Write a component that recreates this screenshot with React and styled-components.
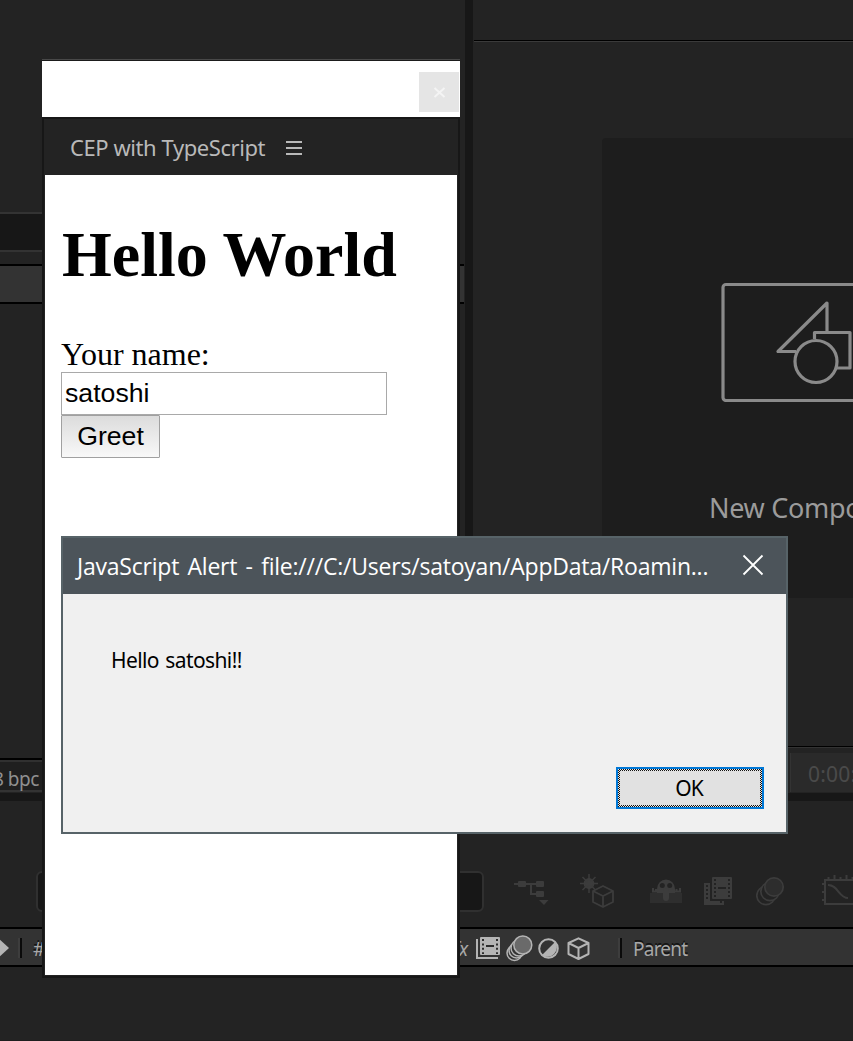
import React from "react";
import styled, { createGlobalStyle } from "styled-components";

const ui = '"Noto Sans", "Open Sans", sans-serif';

const GlobalStyle = createGlobalStyle`
  * { box-sizing: border-box; }
  html, body { margin: 0; padding: 0; background: #232323; overflow: hidden; }
`;

const Desktop = styled.div`
  position: relative;
  width: 853px;
  height: 1041px;
  overflow: hidden;
  display: flex;
  flex-direction: column;
  background: #232323;
  font-family: ${ui};
`;

const UpperRow = styled.div`
  display: flex;
  height: 793px;
`;

const Gutter = styled.div`
  flex: none;
  background: #171717;
  width: ${(p) => (p.$vertical ? "8px" : "100%")};
  height: ${(p) => (p.$vertical ? "auto" : "8px")};
`;

const ProjectPanel = styled.section`
  width: 465px;
  display: flex;
  flex-direction: column;
  padding-top: 212px;
`;

const ProjectSearch = styled.div`
  height: 40px;
  margin-right: 20px;
  background: #171717;
  border-top: 2px solid #333;
  border-bottom: 2px solid #333;
`;

const ProjectColumns = styled.div`
  height: 40px;
  margin: 12px 1px 0 0;
  background: #333;
  border-top: 2px solid #000;
  border-bottom: 2px solid #000;
`;

const ProjectFooter = styled.div`
  height: 34px;
  margin: auto 20px 1px 0;
  border-top: 2px solid #000;
  border-bottom: 2px solid #333;
  box-shadow: inset 0 2px #303030;
  background: #1f1f1f;
  display: flex;
  align-items: center;
  padding-top: 7px;
`;

const BitDepth = styled.span`
  margin-left: -7px;
  font-size: 19px;
  line-height: 26px;
  letter-spacing: -0.5px;
  white-space: nowrap;
  color: #909090;
`;

const CompPanel = styled.section`
  flex: 1;
  min-width: 0;
  overflow: hidden;
  display: flex;
  flex-direction: column;
`;

const CompTabs = styled.div`
  height: 42px;
  margin-left: 1px;
  border-bottom: 1px solid #3a3a3a;
  box-shadow: inset 0 -1px #000;
`;

const Viewer = styled.div`
  height: 704px;
  padding: 96px 0 0 129px;
`;

const NewCompCard = styled.div`
  width: 380px;
  height: 460px;
  padding: 143px 0 0 107px;
  border-radius: 4px;
  background: #1d1d1d;
  svg { display: block; margin-left: 11px; }
`;

const NewCompLabel = styled.div`
  margin-top: 88px;
  font-size: 27px;
  line-height: 36px;
  letter-spacing: -0.3px;
  white-space: nowrap;
  color: #9b9b9b;
`;

const ViewerFooter = styled.div`
  height: 47px;
  padding: 6px 0 1px 317px;
  border-top: 1px solid #000;
  box-shadow: inset 0 1px #333;
  background: #232323;
`;

const TimeField = styled.div`
  height: 39px;
  padding-left: 17px;
  border-left: 1px solid #333;
  background: #2a2a2a;
  font-size: 21px;
  line-height: 43px;
  letter-spacing: 0.2px;
  white-space: nowrap;
  color: #4a4a4a;
`;

const Timeline = styled.section`
  flex: 1;
  display: flex;
  flex-direction: column;
  overflow: hidden;
  border-bottom: 1px solid #1e1e1e;
`;

const TimelineTools = styled.div`
  display: flex;
  align-items: flex-start;
  height: 126px;
  padding: 70px 0 0 36px;
  svg { flex: none; }
`;

const SearchField = styled.div`
  width: 448px;
  height: 41px;
  flex: none;
  border: 2px solid #303030;
  border-radius: 6px;
  background: #171717;
  margin-right: 30px;
`;

const Slot = styled.span`
  display: block;
  flex: none;
  width: ${(p) => p.$w}px;
  height: 40px;
  svg { display: block; }
`;

const TimelineColumns = styled.div`
  display: flex;
  align-items: center;
  height: 40px;
  padding-top: 2px;
  border-top: 2px solid #000;
  border-bottom: 2px solid #000;
  background: #333;
  svg { flex: none; display: block; }
`;

const Divider = styled.i`
  flex: none;
  width: 4px;
  height: 20px;
  border-left: 2px solid #3d3d3d;
  border-right: 2px solid #0a0a0a;
`;

const HeaderText = styled.span`
  flex: none;
  width: ${(p) => p.$w}px;
  margin-left: ${(p) => p.$gap}px;
  padding-top: 2px;
  font-size: 19px;
  line-height: 34px;
  letter-spacing: ${(p) => p.$track || 0}px;
  font-style: ${(p) => (p.$italic ? "italic" : "normal")};
  color: #a8a8a8;
  text-shadow: ${(p) => (p.$italic ? "none" : "0 -2px 0 #141414")};
  white-space: nowrap;
`;

const PanelWindow = styled.div`
  position: absolute;
  left: 42px;
  top: 59px;
  width: 418px;
  height: 919px;
  display: flex;
  flex-direction: column;
  border-top: 1px solid #484848;
  background: #171717;
`;

const WindowBar = styled.div`
  height: 57px;
  display: flex;
  justify-content: flex-end;
  padding: 11px 1px 0 0;
  border-top: 1px solid #1b1b1b;
  background: #fff;
`;

const WindowClose = styled.button`
  width: 40px;
  height: 40px;
  padding: 0;
  border: 0;
  background: #e5e5e5;
  svg { display: block; }
`;

const PanelFrame = styled.div`
  flex: 1;
  margin: 2px;
  display: flex;
  flex-direction: column;
  padding: 0 1px 1px;
  background: #232323;
`;

const PanelTab = styled.div`
  height: 56px;
  display: flex;
  align-items: center;
  gap: 20px;
  padding: 2px 0 0 25px;
  color: #b9b9b9;
  font-size: 22px;
  letter-spacing: -0.43px;
  white-space: nowrap;
`;

const TabName = styled.span`
  width: 196px;
  padding-bottom: 2px;
`;

const Page = styled.main`
  flex: 1;
  padding: 43px 16px 0;
  background: #fff;
  color: #000;
  font-family: "Liberation Serif", serif;
`;

const Heading = styled.h1`
  margin: 0 0 43px;
  padding-left: 1px;
  font-size: 64px;
  line-height: 74px;
  font-weight: bold;
  white-space: nowrap;
`;

const Label = styled.label`
  display: block;
  height: 37px;
  font-size: 32px;
  line-height: 39px;
`;

const NameInput = styled.input`
  display: block;
  width: 326px;
  height: 43px;
  padding: 0 3px;
  border: 1px solid #a9a9a9;
  border-radius: 0;
  outline: 0;
  font: 26.67px "Liberation Sans", sans-serif;
  color: #000;
`;

const GreetButton = styled.button`
  display: block;
  width: 99px;
  height: 43px;
  padding: 0;
  border: 1px solid #a0a0a0;
  border-radius: 1px;
  background: linear-gradient(#dcdcdc, #f8f8f8);
  font: 26.67px "Liberation Sans", sans-serif;
  color: #000;
`;

const Alert = styled.div`
  position: absolute;
  left: 61px;
  top: 536px;
  width: 727px;
  height: 298px;
  display: flex;
  flex-direction: column;
  border: 2px solid #576368;
  background: #f0f0f0;
`;

const AlertTitle = styled.div`
  height: 56px;
  display: flex;
  align-items: center;
  justify-content: space-between;
  padding: 0 22px 0 14px;
  background: #4c545a;
  color: #fff;
  font-family: "Open Sans", sans-serif;
  font-size: 23px;
  letter-spacing: -0.22px;
  word-spacing: 2.6px;
  white-space: nowrap;
  svg { margin-top: -2px; }
`;

const AlertBody = styled.div`
  flex: 1;
  display: flex;
  flex-direction: column;
  justify-content: space-between;
  padding: 51px 22px 23px 48px;
  font-size: 21px;
  line-height: 30px;
  color: #000;
`;

const Message = styled.p`
  margin: 0;
  letter-spacing: -0.6px;
  word-spacing: 1.5px;
`;

const OkButton = styled.button`
  align-self: flex-end;
  width: 148px;
  height: 42px;
  padding: 0 2px 0 0;
  border: 2px solid #0078d7;
  background:
    linear-gradient(#e1e1e1, #e1e1e1) center / 140px 34px no-repeat,
    repeating-conic-gradient(#111 0 25%, #e8e8e8 0 50%) 0 0 / 2px 2px;
  font: 21px/34px ${ui};
  letter-spacing: -1px;
  color: #000;
`;

function CompositionArt() {
  return (
    <svg width="190" height="121" viewBox="0 0 190 121" fill="none" stroke="#8a8a8a" strokeWidth="3.2" strokeLinejoin="round">
      <rect x="3" y="3.500" width="186" height="116" rx="3" />
      <path d="M107 51V22L58 70.500H76M94.500 58V51.500H130V87H117" />
      <circle cx="96" cy="80.500" r="21" />
    </svg>
  );
}

function Flowchart() {
  return (
    <svg width="36" height="40" viewBox="0 0 36 40" fill="#3c3c3c">
      <path d="M0 12h22v2H0zM16 14h2v10h-2zM18 22h4v2h-4z" />
      <rect x="4" y="10" width="8" height="6" rx="1" />
      <rect x="22" y="10" width="8" height="6" rx="1" />
      <rect x="22" y="20" width="8" height="6" rx="1" />
      <path d="M25 29h9.500L30 34z" />
    </svg>
  );
}

function Draft3D() {
  return (
    <svg width="36" height="40" viewBox="0 0 36 40" fill="none" stroke="#3c3c3c" strokeWidth="1.8">
      <circle cx="9" cy="12.500" r="4.500" fill="#3c3c3c" />
      <path d="M9 3v19M0 12.500h18M2.500 6l13 13M15.500 6l-13 13" strokeWidth="1.500" />
      <path d="M23 15l10 5v11l-10 5-10-5V20z" fill="#232323" strokeLinejoin="round" />
      <path d="M13 20l10 5 10-5M23 25v11" />
    </svg>
  );
}

function Shy() {
  return (
    <svg width="32" height="40" viewBox="0 0 32 40">
      <rect y="22" width="32" height="10" fill="#2e2e2e" />
      <path d="M3 17v3.500h27V17M6 18v3M26.500 18v3" stroke="#3c3c3c" strokeWidth="2" fill="none" />
      <path d="M7 22v-4a9 9.500 0 0 1 18 0v4z" fill="#3c3c3c" />
      <circle cx="12.300" cy="14.500" r="2.500" fill="#232323" />
      <circle cx="19.700" cy="14.500" r="2.500" fill="#232323" />
      <rect x="13" y="17" width="6" height="13" rx="3" fill="#3c3c3c" />
    </svg>
  );
}

function FrameBlendTool() {
  return (
    <svg width="28" height="40" viewBox="0 0 28 40">
      <path d="M0 12h6v18h14v4H0z" fill="#3c3c3c" />
      <path d="M3 14v16" stroke="#232323" strokeWidth="2" strokeDasharray="2 2" />
      <path d="M16 31h2" stroke="#232323" strokeWidth="2" />
      <rect x="8" y="6" width="20" height="22" rx="1" fill="#3c3c3c" />
      <path d="M11 8v18M25 8v18" stroke="#232323" strokeWidth="2" strokeDasharray="2 2" />
      <path d="M14 17h8" stroke="#232323" strokeWidth="2" />
    </svg>
  );
}

function MotionBlurTool() {
  return (
    <svg width="29" height="40" viewBox="0 0 29 40" fill="#232323" stroke="#3c3c3c" strokeWidth="1.700">
      <circle cx="10" cy="24.500" r="9.200" />
      <circle cx="14" cy="20.500" r="9.200" />
      <circle cx="18" cy="16" r="9.200" fill="#2d2d2d" />
    </svg>
  );
}

function GraphTool() {
  return (
    <svg width="36" height="40" viewBox="0 0 36 40" fill="none" stroke="#3c3c3c" strokeWidth="2">
      <path d="M3 9h33M3 8v25h33M6.500 6v2M12.500 4v4M18.500 6v2M24.500 4v4M30.500 6v2M0 13h3M0 21h3M0 29h3" />
      <path d="M6 14c10 0 11 13 20 13" />
    </svg>
  );
}

function Diamond() {
  return (
    <svg width="9" height="20" viewBox="0 0 9 20">
      <path d="M-2 0L9 10-2 20z" fill="#b4b4b4" />
    </svg>
  );
}

function FrameBlend() {
  return (
    <svg width="24" height="23" viewBox="0 0 24 23">
      <path d="M1 2v19h21" fill="none" stroke="#b4b4b4" strokeWidth="2" />
      <rect x="4" width="20" height="18" rx="1" fill="#b4b4b4" />
      <path d="M7 2v15M21 2v15" stroke="#2c2c2c" strokeWidth="2" strokeDasharray="2 2.400" />
      <path d="M10 9h8" stroke="#2c2c2c" strokeWidth="2" />
    </svg>
  );
}

function MotionBlur() {
  return (
    <svg width="27" height="27" viewBox="0 0 27 27" fill="#333" stroke="#b4b4b4" strokeWidth="1.500">
      <circle cx="8.500" cy="18" r="7.500" />
      <circle cx="10.500" cy="15.500" r="7.500" />
      <circle cx="13" cy="13" r="8" />
      <circle cx="16.800" cy="10" r="9" fill="#6a6a6a" />
    </svg>
  );
}

function Adjustment() {
  return (
    <svg width="21" height="21" viewBox="0 0 21 21">
      <circle cx="10.500" cy="10.500" r="9.300" fill="none" stroke="#b4b4b4" strokeWidth="2" />
      <path d="M17 4a9.300 9.300 0 0 1-13 13z" fill="#b4b4b4" />
    </svg>
  );
}

function Cube() {
  return (
    <svg width="23" height="23" viewBox="0 0 23 23" fill="none" stroke="#b4b4b4" strokeWidth="2" strokeLinejoin="round">
      <path d="M11.500 1.300l10 4.700v11l-10 5-10-5V6zM1.500 6l10 5 10-5M11.500 11v11" />
    </svg>
  );
}

const Columns = styled.div`
  display: flex;
  align-items: center;
  gap: ${(p) => p.$gap || 0}px;
  margin-left: ${(p) => p.$offset || 0}px;
`;

export default function App() {
  return (
    <Desktop>
      <GlobalStyle />
      <UpperRow>
        <ProjectPanel>
          <ProjectSearch />
          <ProjectColumns />
          <ProjectFooter>
            <BitDepth>8 bpc</BitDepth>
          </ProjectFooter>
        </ProjectPanel>
        <Gutter $vertical />
        <CompPanel>
          <CompTabs />
          <Viewer>
            <NewCompCard>
              <CompositionArt />
              <NewCompLabel>New Composition</NewCompLabel>
            </NewCompCard>
          </Viewer>
          <ViewerFooter>
            <TimeField>0:00:00:00</TimeField>
          </ViewerFooter>
        </CompPanel>
      </UpperRow>
      <Gutter />
      <Timeline>
        <TimelineTools>
          <SearchField />
          <Slot $w={66}><Flowchart /></Slot>
          <Slot $w={70}><Draft3D /></Slot>
          <Slot $w={54}><Shy /></Slot>
          <Slot $w={52}><FrameBlendTool /></Slot>
          <Slot $w={66}><MotionBlurTool /></Slot>
          <Slot $w={36}><GraphTool /></Slot>
        </TimelineTools>
        <TimelineColumns>
          <Diamond />
          <Columns $offset={9}><Divider /></Columns>
          <HeaderText $gap={11} $w={420}>#</HeaderText>
          <HeaderText $gap={0} $w={23} $italic>fx</HeaderText>
          <FrameBlend />
          <Columns $offset={6}><MotionBlur /></Columns>
          <Columns $offset={5} $gap={8}><Adjustment /><Cube /></Columns>
          <Columns $offset={28}><Divider /></Columns>
          <HeaderText $gap={11} $w={100} $track={-0.75}>Parent</HeaderText>
        </TimelineColumns>
      </Timeline>

      <PanelWindow>
        <WindowBar>
          <WindowClose aria-label="Close">
            <svg width="40" height="40" viewBox="0 0 40 40" stroke="#f4f4f4" strokeWidth="2">
              <path d="M15.500 16l10 9M25.500 16l-10 9" />
            </svg>
          </WindowClose>
        </WindowBar>
        <PanelFrame>
          <PanelTab>
            <TabName>CEP with TypeScript</TabName>
            <svg width="16" height="16" viewBox="0 0 16 16" stroke="#b9b9b9" strokeWidth="2">
              <path d="M0 2h16M0 8h16M0 14h16" />
            </svg>
          </PanelTab>
          <Page>
            <Heading>Hello World</Heading>
            <Label>Your name:</Label>
            <NameInput defaultValue="satoshi" />
            <GreetButton>Greet</GreetButton>
          </Page>
        </PanelFrame>
      </PanelWindow>

      <Alert role="alertdialog">
        <AlertTitle>
          <span>JavaScript Alert - file:///C:/Users/satoyan/AppData/Roamin...</span>
          <svg width="22" height="22" viewBox="0 0 22 22" stroke="#fff" strokeWidth="1.800">
            <path d="M1.500 1.500l19 19M20.500 1.500l-19 19" />
          </svg>
        </AlertTitle>
        <AlertBody>
          <Message>Hello satoshi!!</Message>
          <OkButton>OK</OkButton>
        </AlertBody>
      </Alert>
    </Desktop>
  );
}
